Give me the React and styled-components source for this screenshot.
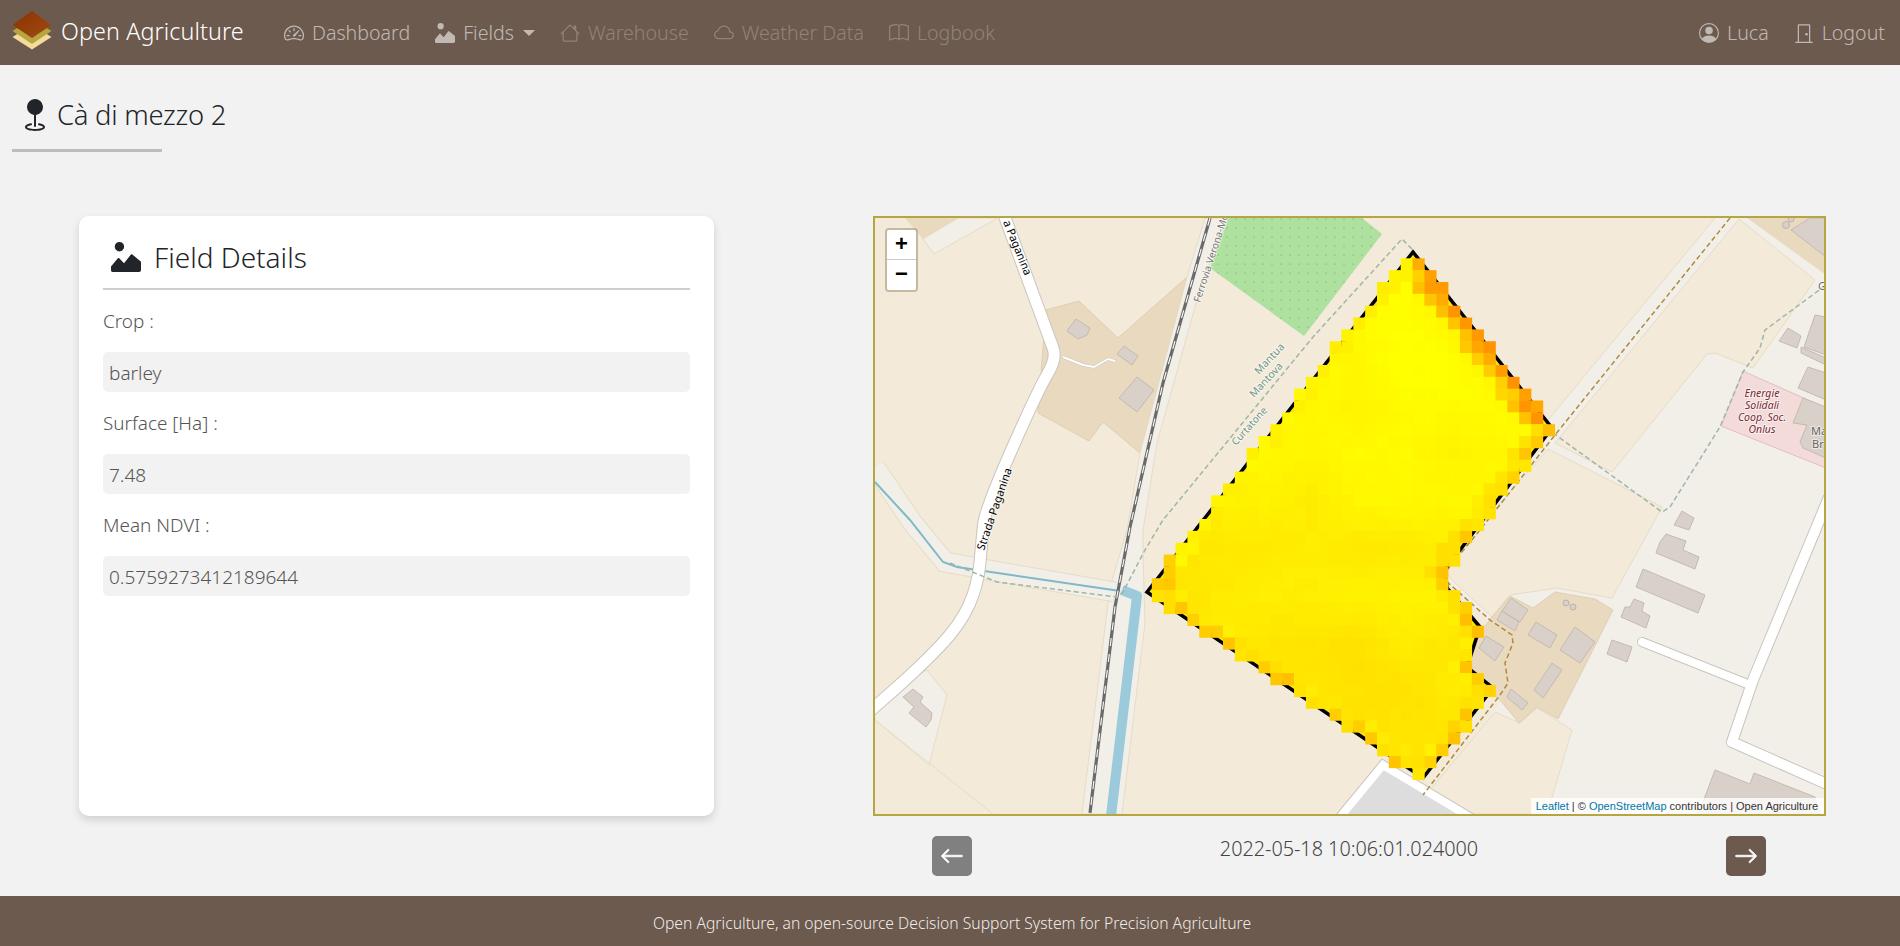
import React from "react";
import styled, { createGlobalStyle } from "styled-components";
import {
  BsSpeedometer2, BsImageAlt, BsHouse, BsCloud, BsBook, BsPersonCircle,
  BsDoorClosed, BsGeoFill, BsArrowLeft, BsArrowRight,
} from "react-icons/bs";

const FONT = `"Noto Sans", "Open Sans", sans-serif`;

const Global = createGlobalStyle`
  html, body { margin: 0; padding: 0; background: #f2f2f2; }
  body { font-family: ${FONT}; color: #212529; }
  * { box-sizing: border-box; }
`;

const Page = styled.div`
  min-height: 946px;
  display: flex;
  flex-direction: column;
`;

const Navbar = styled.nav`
  height: 65px;
  background: #6d5a4e;
  display: flex;
  align-items: center;
  padding: 0 15px 0 12px;
  flex: none;
`;
const Brand = styled.a`
  display: flex;
  align-items: center;
  gap: 9px;
  color: #fff;
  font-size: 23.3px;
  font-weight: 300;
  letter-spacing: 0.1px;
  width: 272px;
  margin-top: -4px;
  flex: none;
`;
const NavList = styled.div`
  display: flex;
  align-items: center;
  gap: 25px;
  flex: ${(p) => (p.$end ? "none" : 1)};
`;
const NavItem = styled.a`
  display: flex;
  align-items: center;
  gap: 8px;
  font-size: 19.6px;
  font-weight: 300;
  color: ${(p) => (p.$off ? "rgba(255,255,255,.25)" : "rgba(255,255,255,.58)")};
  svg { font-size: 20px; flex: none; }
`;
const Caret = styled.span`
  width: 0;
  height: 0;
  border-left: 6px solid transparent;
  border-right: 6px solid transparent;
  border-top: 6px solid rgba(255,255,255,.58);
  margin-left: 1px;
`;

const Main = styled.main`
  flex: 1;
  display: flex;
  flex-direction: column;
`;
const TitleBlock = styled.div`
  padding: 0 0 0 12px;
  height: 151px;
`;
const Title = styled.h1`
  margin: 0;
  height: 87px;
  width: 150px;
  white-space: nowrap;
  border-bottom: 3px solid #bdbdbd;
  display: flex;
  align-items: center;
  gap: 6px;
  padding: 16px 0 0 11px;
  font-size: 27.4px;
  font-weight: 300;
  letter-spacing: -0.25px;
  line-height: 1;
  svg { font-size: 32px; margin-left: -4px; flex: none; }
`;
const Content = styled.div`
  display: grid;
  grid-template-columns: 635px 953px;
  column-gap: 159px;
  padding-left: 79px;
`;
const Card = styled.section`
  height: 600px;
  background: #fff;
  border-radius: 10px;
  box-shadow: 0 4px 8px rgba(0,0,0,.14);
  padding: 0 24px;
`;
const CardHead = styled.h2`
  margin: 0;
  height: 74px;
  border-bottom: 2px solid #cfcfcf;
  display: flex;
  align-items: center;
  gap: 13px;
  padding: 9px 0 0 8px;
  font-size: 28px;
  font-weight: 300;
  svg { font-size: 30px; flex: none; }
`;
const Label = styled.div`
  height: 62px;
  display: flex;
  align-items: center;
  font-size: 18.9px;
  font-weight: 300;
  color: #555;
`;
const Value = styled.div`
  height: 40px;
  background: #f2f2f2;
  border-radius: 5px;
  display: flex;
  align-items: center;
  padding: 1px 6px 0;
  font-size: 19px;
  font-weight: 300;
  color: #555;
`;
const MapCol = styled.div`
  display: flex;
  flex-direction: column;
`;
const MapFrame = styled.div`
  position: relative;
  height: 600px;
  border: 2px solid #b5a642;
  overflow: hidden;
  background: #f3ead9;
  svg { display: block; }
`;
const Zoom = styled.div`
  position: absolute;
  left: 10px;
  top: 10px;
  width: 33px;
  border: 2px solid rgba(90,70,40,.3);
  border-radius: 4px;
  background-clip: padding-box;
`;
const ZoomBtn = styled.div`
  height: 30px;
  background: #fff;
  font: bold 22px/28px "Liberation Sans", sans-serif;
  text-align: center;
  color: #000;
  border-bottom: ${(p) => (p.$first ? "1px solid #ccc" : "none")};
  border-radius: ${(p) => (p.$first ? "2px 2px 0 0" : "0 0 2px 2px")};
`;
const Attribution = styled.div`
  position: absolute;
  right: 0;
  bottom: 0;
  height: 16px;
  padding: 0 6px 0 5px;
  background: rgba(255,255,255,.8);
  font: 11px/16px "Liberation Sans", sans-serif;
  color: #333;
  white-space: nowrap;
  a { color: #0078a8; }
`;
const Stepper = styled.div`
  display: flex;
  justify-content: space-between;
  align-items: flex-start;
  margin: 20px 60px 0 59px;
`;
const StepButton = styled.button`
  width: 40px;
  height: 40px;
  border: none;
  border-radius: 5px;
  padding: 0;
  display: flex;
  align-items: center;
  justify-content: center;
  color: #fff;
  background: ${(p) => (p.$muted ? "#808080" : "#6d5a4e")};
  svg { font-size: 24px; stroke: currentColor; stroke-width: .55; }
`;
const Stamp = styled.div`
  font-size: 19.8px;
  font-weight: 300;
  line-height: 25px;
  color: #444;
`;
const Footer = styled.footer`
  height: 50px;
  flex: none;
  background: #6d5a4e;
  color: rgba(255,255,255,.9);
  display: flex;
  align-items: center;
  justify-content: center;
  padding: 4px 0 0 4px;
  font-size: 15.7px;
  font-weight: 300;
`;

const Logo = () => (
  <svg width="40" height="39" viewBox="0 0 40 39">
    <defs>
      <linearGradient id="lg" x1="0" y1="0" x2="1" y2="1">
        <stop offset="0" stopColor="#8a3300" />
        <stop offset="1" stopColor="#a24a14" />
      </linearGradient>
    </defs>
    <path d="M20 14 L39.500 26 L20 38.500 L0.500 26 Z" fill="#f6dc9a" />
    <path d="M20 8 L39.500 20 L20 33 L0.500 20 Z" fill="#b7a63f" />
    <path d="M20 0 L39.500 14 L20 27 L0.500 14 Z" fill="url(#lg)" />
  </svg>
);

const FIELD = [[1413, 252], [1552, 428], [1445, 570], [1447, 588], [1480, 627], [1467, 667], [1493, 688], [1423, 778], [1147, 592]];

function inside(x, y) {
  let c = false;
  for (let i = 0, j = FIELD.length - 1; i < FIELD.length; j = i++) {
    const [xi, yi] = FIELD[i], [xj, yj] = FIELD[j];
    if (yi > y !== yj > y && x < ((xj - xi) * (y - yi)) / (yj - yi) + xi) c = !c;
  }
  return c;
}
function nearestEdge(x, y) {
  let d = 1e9, edge = 0;
  for (let j = 0; j < FIELD.length; j++) {
    const [ax, ay] = FIELD[j], [bx, by] = FIELD[(j + 1) % FIELD.length];
    const t = Math.max(0, Math.min(1, ((x - ax) * (bx - ax) + (y - ay) * (by - ay)) / ((bx - ax) ** 2 + (by - ay) ** 2)));
    const h = Math.hypot(x - ax - t * (bx - ax), y - ay - t * (by - ay));
    if (h < d) { d = h; edge = j; }
  }
  return { d, edge };
}
function noise(i, j) {
  const s = Math.sin(i * 12.9898 + j * 78.233) * 43758.5453;
  return s - Math.floor(s);
}
function smoothNoise(i, j) {
  const a = Math.floor(i / 4), b = Math.floor(j / 4);
  const u = i / 4 - a, v = j / 4 - b;
  const top = noise(a, b) * (1 - u) + noise(a + 1, b) * u;
  const bot = noise(a, b + 1) * (1 - u) + noise(a + 1, b + 1) * u;
  return top * (1 - v) + bot * v;
}
const STEP = 11.85;
const CELLS = [];
for (let j = -1; j < 46; j++) {
  for (let i = -24; i < 36; i++) {
    const x = 1400.7 + i * STEP, y = 258.3 + j * STEP;
    const cx = x + STEP / 2, cy = y + STEP / 2;
    const { d, edge } = nearestEdge(cx, cy);
    if (!inside(cx, cy) && d > 2.5) continue;
    const drop = Math.max(0, Math.min(1, (cy - 380 + (1400 - cx) * 0.4) / 300));
    const body = 255 - drop * 18 - smoothNoise(i, j) * 13 + noise(i, j) * 3;
    const r = noise(i + 3, j);
    let g;
    if (edge === 0) {
      if (d < 9) g = 145 + noise(i, j) * 30;
      else if (d < 19) g = 190 + noise(i, j) * 25;
      else g = Math.min(body, 236 + d * 0.5);
    } else if (edge === 8) {
      g = cx < 1175 ? 190 + r * 25 : d < 10 ? 236 + r * 14 : body;
    } else if (d < 8 && r > 0.5) {
      g = 190 + noise(i, j) * 22;
    } else if (d < 16) {
      g = 222 + r * 18;
    } else {
      g = body;
    }
    CELLS.push({ x, y, g: Math.min(255, Math.round(g)), k: `${i}_${j}` });
  }
}

const pts = (a) => a.map((p) => p.join(",")).join(" ");
const line = (a) => "M" + a.map((p) => p.join(" ")).join(" L");
const smooth = (a) => {
  let d = `M${a[0].join(" ")}`;
  for (let i = 1; i < a.length - 1; i++) {
    const mx = (a[i][0] + a[i + 1][0]) / 2, my = (a[i][1] + a[i + 1][1]) / 2;
    d += ` Q${a[i][0]} ${a[i][1]} ${mx} ${my}`;
  }
  const l = a[a.length - 1];
  return `${d} L${l[0]} ${l[1]}`;
};

const ROAD = smooth([[1003, 212], [1049, 338], [1057, 358], [1038, 390], [985, 510], [982, 540], [978, 585], [960, 625], [920, 667], [870, 711]]);
const CANAL_ROW = [[875, 467], [912, 522], [945, 562], [1000, 572], [1115, 592]];
const RAIL = [[1210, 218], [1163, 383], [1130, 527], [1115, 607], [1090, 813]];
const DRIVE = [[1063, 357], [1083, 365], [1094, 367], [1108, 359], [1115, 361]];
const EAST_ROAD = [[1829, 497], [1753, 680], [1732, 742], [1829, 785]];
const SPUR = [[1642, 642], [1750, 685]];
const LOT = [[1336, 822], [1383, 765], [1478, 822]];
const GREEN = [[1228, 218], [1362, 218], [1382, 234], [1304, 336], [1210, 268]];

const BUILDINGS = [
  [[1076, 319], [1090, 328], [1087, 335], [1078, 339], [1067, 331]],
  [[1124, 346], [1138, 356], [1132, 365], [1117, 354]],
  [[1137, 377], [1154, 390], [1137, 412], [1119, 398]],
  [[913, 689], [923, 697], [920, 702], [932, 713], [931, 720], [926, 727], [909, 713], [914, 707], [903, 697]],
  [[1791, 230], [1810, 218], [1826, 218], [1826, 257]],
  [[1815, 315], [1826, 317], [1826, 355], [1804, 347]],
  [[1801, 347], [1826, 358], [1826, 365], [1801, 353]],
  [[1808, 367], [1826, 373], [1826, 400], [1798, 388]],
  [[1788, 328], [1801, 336], [1797, 348], [1779, 341]],
  [[1666, 534], [1686, 541], [1683, 550], [1699, 557], [1695, 569], [1656, 553], [1660, 542]],
  [[1682, 511], [1694, 518], [1689, 530], [1674, 525]],
  [[1643, 569], [1705, 595], [1698, 613], [1636, 587]],
  [[1634, 599], [1644, 603], [1642, 611], [1650, 616], [1646, 628], [1621, 617], [1625, 607], [1630, 607]],
  [[1612, 640], [1632, 647], [1627, 662], [1607, 654]],
  [[1715, 770], [1750, 784], [1754, 773], [1815, 797], [1820, 815], [1698, 815]],
  [[1511, 598], [1528, 610], [1520, 622], [1502, 611]],
  [[1502, 611], [1519, 622], [1515, 631], [1497, 620]],
  [[1536, 622], [1557, 635], [1550, 648], [1528, 635]],
  [[1575, 627], [1595, 642], [1580, 663], [1560, 650]],
  [[1552, 663], [1562, 670], [1543, 698], [1534, 690]],
  [[1511, 689], [1528, 703], [1522, 710], [1507, 697]],
  [[1486, 636], [1504, 647], [1495, 661], [1479, 648]],
];

const Halo = ({ x, y, rot, size = 11.2, fill = "#000", anchor = "start", italic, children }) => (
  <text
    x={x} y={y} fontSize={size} fill={fill} textAnchor={anchor} fontStyle={italic ? "italic" : "normal"}
    fontFamily='"Noto Sans", sans-serif' stroke="#fff" strokeOpacity=".55" strokeWidth="2" paintOrder="stroke"
    transform={rot ? `rotate(${rot} ${x} ${y})` : undefined}
  >{children}</text>
);

const MapArt = () => (
  <svg width="949" height="596" viewBox="875 218 949 596" aria-label="map">
    <defs>
      <pattern id="dots" width="9" height="9" patternUnits="userSpaceOnUse">
        <circle cx="3" cy="3" r=".6" fill="#6f9a68" />
      </pattern>
    </defs>
    <rect x="875" y="218" width="949" height="596" fill="#f3ead9" />
    <polygon points={pts([[1715, 218], [1826, 218], [1826, 814], [1420, 814], [1445, 780], [1530, 660], [1440, 575], [1442, 555], [1548, 420]])} fill="#f2efe9" />
    <path d={line([[1715, 218], [1548, 420]])} stroke="#e6dcc6" fill="none" />
    <polygon points={pts([[1739, 219], [1815, 280], [1753, 368], [1715, 353], [1707, 354], [1612, 472], [1555, 443]])} fill="#f3ead9" stroke="#e6dcc6" />
    <polygon points={pts([[1548, 449], [1662, 507], [1612, 598], [1557, 588], [1510, 595], [1492, 617], [1452, 580], [1445, 570], [1448, 563]])} fill="#f3ead9" stroke="#e6dcc6" />
    <polygon points={pts([[1495, 712], [1520, 723], [1537, 708], [1572, 730], [1547, 814], [1410, 814]])} fill="#f3ead9" stroke="#e6dcc6" />
    <polygon points={pts([[1747, 218], [1826, 218], [1826, 275]])} fill="#e9d9bf" />
    <polygon points={pts([[1743, 371], [1826, 408], [1826, 468], [1721, 426]])} fill="#f2dbd9" stroke="#e2bfbf" />
    <polygon points={pts([[1803, 398], [1826, 407], [1826, 458], [1803, 448], [1800, 442], [1807, 425], [1793, 423]])} fill="#d8d0c9" stroke="#c4bab2" />
    <polygon points={pts([[1510, 596], [1533, 608], [1555, 592], [1595, 599], [1613, 610], [1558, 719], [1537, 707], [1519, 723], [1500, 700], [1467, 667], [1480, 633], [1492, 617]])} fill="#e9d9bf" stroke="#e0cfb2" />
    <polygon points={pts([[958, 218], [998, 218], [934, 254], [923, 239]])} fill="#f2efe9" stroke="#e6dcc6" />
    <polygon points={pts([[905, 218], [958, 218], [923, 239]])} fill="#e9d9bf" />
    <polygon points={pts([[1046, 310], [1079, 301], [1118, 338], [1187, 277], [1140, 453], [1103, 422], [1089, 441], [1038, 413]])} fill="#e9d9bf" stroke="#e0cfb2" />
    <polygon points={pts([[927, 670], [947, 695], [929, 765], [875, 720], [875, 700]])} fill="#f2efe9" stroke="#e6dcc6" />
    <path d="M875 720 L993 814" stroke="#e6dcc6" fill="none" />
    <polygon points={pts(GREEN)} fill="#aee0a0" />
    <polygon points={pts(GREEN)} fill="url(#dots)" />
    <polygon points={pts([[1205, 218], [1225, 218], [1197, 300], [1157, 443], [1143, 530], [1143, 553], [1145, 623], [1122, 814], [1082, 814], [1110, 587], [1127, 530], [1140, 453], [1187, 277]])} fill="#f2efe9" stroke="#e6dcc6" />
    <path d={line(CANAL_ROW)} fill="none" stroke="#e6dcc6" strokeWidth="21" />
    <path d={line(CANAL_ROW)} fill="none" stroke="#f2efe9" strokeWidth="19" />
    <path d={line([[875, 482], [910, 520], [943, 562], [957, 567], [1120, 591]])} fill="none" stroke="#7fb9c9" strokeWidth="2" />
    <path d={line([[1122, 590], [1137, 596], [1111, 816]])} fill="none" stroke="#9bcbdb" strokeWidth="10" strokeLinejoin="round" />
    <path d={line(RAIL)} fill="none" stroke="#6a6a6a" strokeWidth="3.2" />
    <path d={line(RAIL)} fill="none" stroke="#fff" strokeWidth="1.1" strokeDasharray="8 8" />
    <path d={ROAD} fill="none" stroke="#c9c5bf" strokeWidth="13" />
    <path d={ROAD} fill="none" stroke="#fff" strokeWidth="11" />
    <path d={line(DRIVE)} fill="none" stroke="#c9c5bf" strokeWidth="3" />
    <path d={line(DRIVE)} fill="none" stroke="#fff" strokeWidth="2" />
    <path d={line(EAST_ROAD)} fill="none" stroke="#c9c5bf" strokeWidth="12" strokeLinejoin="round" />
    <path d={line(SPUR)} fill="none" stroke="#c9c5bf" strokeWidth="10" strokeLinecap="round" />
    <path d={line(EAST_ROAD)} fill="none" stroke="#fff" strokeWidth="10" strokeLinejoin="round" />
    <path d={line(SPUR)} fill="none" stroke="#fff" strokeWidth="8" strokeLinecap="round" />
    <polygon points={pts(LOT)} fill="#ddd" stroke="#c9c5bf" strokeWidth="10" />
    <polygon points={pts(LOT)} fill="#ddd" stroke="#fff" strokeWidth="8" />
    {BUILDINGS.map((b, i) => (
      <polygon key={i} points={pts(b)} fill="#d8d0c9" stroke="#c4bab2" />
    ))}
    <circle cx="1566" cy="603" r="3" fill="#d8d0c9" stroke="#bdb3ab" />
    <circle cx="1573" cy="607" r="3" fill="#d8d0c9" stroke="#bdb3ab" />
    <circle cx="1786" cy="225" r="3.500" fill="#d8d0c9" stroke="#bdb3ab" />
    <circle cx="1791" cy="219" r="3" fill="#d8d0c9" stroke="#bdb3ab" />
    <g fill="none" stroke="#9fb5a8" strokeWidth="1.5" strokeDasharray="5 3">
      <path d={line([[950, 563], [997, 582], [1117, 597], [1123, 592], [1145, 550], [1163, 520], [1313, 337], [1402, 239], [1413, 250]])} />
      <path d={line([[1553, 433], [1662, 512], [1670, 507], [1720, 427], [1743, 372], [1760, 348], [1765, 330], [1826, 285]])} />
    </g>
    <path d={line([[1730, 218], [1555, 435], [1480, 530], [1447, 570], [1445, 580], [1490, 620], [1512, 635], [1513, 643], [1505, 663], [1508, 683], [1500, 695], [1423, 795]])} fill="none" stroke="#ae8a3d" strokeWidth="1.5" strokeDasharray="5 3" />
    <polygon points={pts(FIELD)} fill="#ffe600" stroke="#000" strokeWidth="3.500" strokeLinejoin="miter" />
    {CELLS.map((c) => (
      <rect key={c.k} x={c.x} y={c.y} width={STEP + 0.3} height={STEP + 0.3} fill={`rgb(255,${c.g},0)`} />
    ))}
    <Halo x={1003} y={222} rot={68}>a Paganina</Halo>
    <Halo x={984} y={551} rot={-71}>Strada Paganina</Halo>
    <Halo x={1200} y={303} size={10} rot={-72} fill="#777">Ferrovia Verona-Mo</Halo>
    <Halo x={1259} y={375} size={10.5} rot={-47} fill="#6f9583">Mantua</Halo>
    <Halo x={1254} y={398} size={10.5} rot={-47} fill="#6f9583">Mantova</Halo>
    <Halo x={1236} y={446} size={10} rot={-48} fill="#6f9583">Curtatone</Halo>
    <Halo x={1762} y={397} size={10.5} anchor="middle" italic fill="#7a2a35">Energie</Halo>
    <Halo x={1762} y={409} size={10.5} anchor="middle" italic fill="#7a2a35">Solidali</Halo>
    <Halo x={1762} y={421} size={10.5} anchor="middle" italic fill="#7a2a35">Coop. Soc.</Halo>
    <Halo x={1762} y={433} size={10.5} anchor="middle" italic fill="#7a2a35">Onlus</Halo>
    <Halo x={1811} y={435} size={11} fill="#666">Ma</Halo>
    <Halo x={1812} y={448} size={11} fill="#666">Br</Halo>
    <Halo x={1818} y={290} size={11} fill="#666">G</Halo>
  </svg>
);

export default function App() {
  return (
    <Page>
      <Global />
      <Navbar>
        <Brand><Logo />Open Agriculture</Brand>
        <NavList>
          <NavItem><BsSpeedometer2 />Dashboard</NavItem>
          <NavItem><BsImageAlt />Fields<Caret /></NavItem>
          <NavItem $off><BsHouse />Warehouse</NavItem>
          <NavItem $off><BsCloud />Weather Data</NavItem>
          <NavItem $off><BsBook />Logbook</NavItem>
        </NavList>
        <NavList $end>
          <NavItem><BsPersonCircle />Luca</NavItem>
          <NavItem><BsDoorClosed />Logout</NavItem>
        </NavList>
      </Navbar>
      <Main>
        <TitleBlock>
          <Title><BsGeoFill />Cà di mezzo 2</Title>
        </TitleBlock>
        <Content>
          <Card>
            <CardHead><BsImageAlt />Field Details</CardHead>
            <Label>Crop :</Label>
            <Value>barley</Value>
            <Label>Surface [Ha] :</Label>
            <Value>7.48</Value>
            <Label>Mean NDVI :</Label>
            <Value>0.5759273412189644</Value>
          </Card>
          <MapCol>
            <MapFrame>
              <MapArt />
              <Zoom>
                <ZoomBtn $first>+</ZoomBtn>
                <ZoomBtn>−</ZoomBtn>
              </Zoom>
              <Attribution>
                <a>Leaflet</a> | © <a>OpenStreetMap</a> contributors | Open Agriculture
              </Attribution>
            </MapFrame>
            <Stepper>
              <StepButton $muted><BsArrowLeft /></StepButton>
              <Stamp>2022-05-18 10:06:01.024000</Stamp>
              <StepButton><BsArrowRight /></StepButton>
            </Stepper>
          </MapCol>
        </Content>
      </Main>
      <Footer>Open Agriculture, an open-source Decision Support System for Precision Agriculture</Footer>
    </Page>
  );
}
